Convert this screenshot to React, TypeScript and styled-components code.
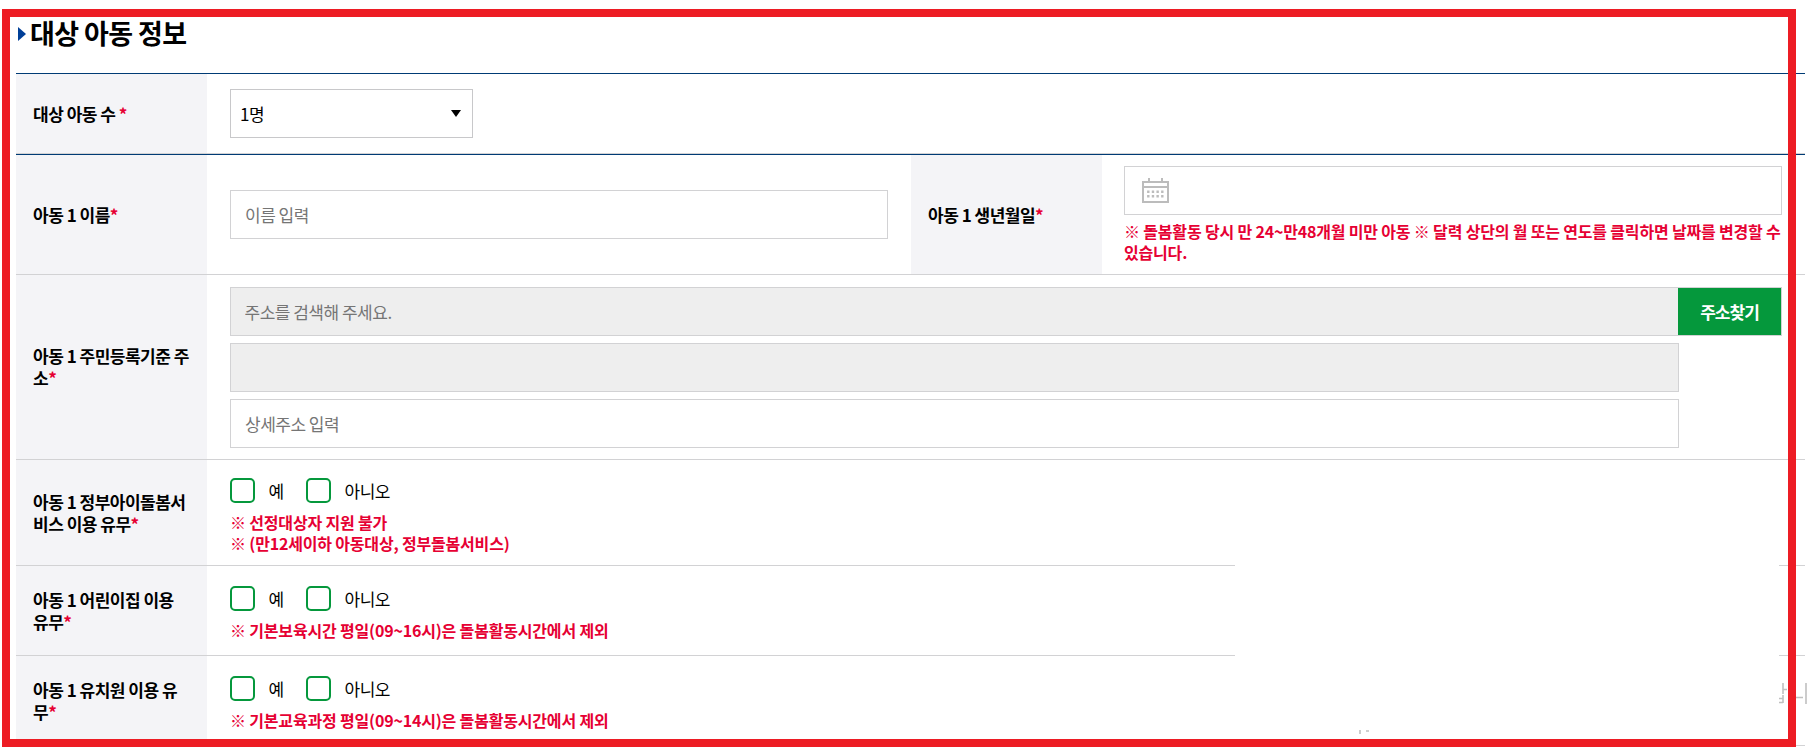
import React from "react";
import styled, { createGlobalStyle } from "styled-components";

const GlobalStyle = createGlobalStyle`
  * {
    box-sizing: border-box;
  }
  body {
    margin: 0;
    background: #fff;
    color: #000;
    font-family: "Noto Sans CJK KR", sans-serif;
    font-size: 17px;
    letter-spacing: -0.5px;
    overflow: hidden;
  }
`;

const Page = styled.main`
  position: relative;
  width: 1808px;
  height: 756px;
  padding: 9px 3px 0 16px;
  overflow: hidden;
`;
/* red highlight drawn over the form */
const Frame = styled.div`
  position: absolute;
  left: 2px;
  top: 9px;
  width: 1794px;
  height: 738px;
  border: 8px solid #ed1c24;
  pointer-events: none;
`;
const Title = styled.h2`
  display: flex;
  align-items: center;
  gap: 4px;
  height: 64px;
  margin: 0;
  padding: 0 0 17px 2px;
  font-size: 27px;
  font-weight: 700;
  line-height: 40px;
  letter-spacing: -0.6px;
`;
const TitleMark = styled.span`
  border-left: 8px solid #003f98;
  border-top: 7.5px solid transparent;
  border-bottom: 7.5px solid transparent;
  margin-top: 3px;
`;
const Table = styled.section`
  border-top: 1px solid #003b75;
`;
const Row = styled.div<{ $height: number }>`
  display: flex;
  height: ${(p) => p.$height}px;
  border-bottom: 1px solid #d2d2d4;
`;
const Label = styled.div`
  display: flex;
  align-items: center;
  width: 191px;
  flex: none;
  padding: 0 17px;
  background: #f4f4f7;
  font-weight: 700;
  line-height: 22px;
  word-break: break-all;
`;
const Star = styled.span`
  color: #e60033;
`;
const Cell = styled.div<{ $gap?: number; $top?: number; $left?: number }>`
  display: flex;
  flex: 1;
  min-width: 0;
  flex-direction: column;
  justify-content: center;
  gap: ${(p) => p.$gap ?? 0}px;
  padding: ${(p) => p.$top ?? 0}px 23px 0 ${(p) => p.$left ?? 23}px;
`;
const Select = styled.button`
  display: flex;
  align-items: center;
  justify-content: space-between;
  width: 243px;
  height: 49px;
  padding: 0 11px 0 9px;
  border: 1px solid #c8c8ca;
  background: #fff;
  color: #000;
  font: inherit;
  letter-spacing: inherit;
`;
const Caret = styled.span`
  border-top: 7px solid #000;
  border-left: 5.5px solid transparent;
  border-right: 5.5px solid transparent;
`;
const Input = styled.input<{ $short?: boolean }>`
  width: ${(p) => (p.$short ? "1449px" : "100%")};
  height: 49px;
  min-width: 0;
  padding: 0 14px;
  border: 1px solid #d2d2d4;
  border-radius: 0;
  background: #fff;
  font: inherit;
  letter-spacing: inherit;
  &:read-only {
    background: #eee;
  }
  &::placeholder {
    color: #757575;
  }
`;
const DateField = styled.div`
  display: flex;
  align-items: center;
  height: 49px;
  padding: 0 17px;
  border: 1px solid #d2d2d4;
`;
const Search = styled.div`
  display: flex;
  height: 49px;
  border: 1px solid #d2d2d4;
  background: #eee;
  input {
    flex: 1;
    height: 47px;
    padding-left: 13.5px;
    border: 0;
  }
`;
const SearchButton = styled.button`
  width: 103px;
  padding: 0;
  border: 0;
  background: #05983c;
  color: #fff;
  font: inherit;
  font-weight: 700;
  letter-spacing: -1px;
`;
const Notice = styled.p`
  margin: 0;
  color: #e60033;
  font-size: 16px;
  font-weight: 700;
  line-height: 20.8px;
  letter-spacing: -0.18px;
  white-space: pre-line;
`;
const Choices = styled.div`
  display: flex;
  height: 25px;
  line-height: 25px;
`;
const Choice = styled.label<{ $width: number }>`
  display: flex;
  align-items: center;
  gap: 13.5px;
  width: ${(p) => p.$width}px;
`;
const Check = styled.input`
  appearance: none;
  width: 25px;
  height: 25px;
  margin: 0;
  border: 2px solid #05983c;
  border-radius: 5px;
  background: #fff;
`;
/* blank patch which hides part of the row lines */
const Cover = styled.div`
  position: absolute;
  left: 1235px;
  top: 480px;
  width: 544px;
  height: 256px;
  background: #fff;
`;
const Remnant = styled.svg`
  position: absolute;
  left: 0;
  top: 0;
`;

const Calendar = () => (
  <svg width="27" height="25" viewBox="0 0 27 25" fill="none" stroke="#bcbcbc">
    <path d="M1 4H26V24H1ZM0 9H27" strokeWidth="2" />
    <path d="M7 0V4M20 0V4" strokeWidth="2" />
    <path d="M5.1 13.7H21.8M5.1 18.3H21.8" strokeWidth="2.4" strokeDasharray="2.4 2.27" />
  </svg>
);

interface QuestionProps {
  label: string;
  notice: string;
  height: number;
}

const Question: React.FC<QuestionProps> = ({ label, notice, height }) => (
  <Row $height={height}>
    <Label>
      <span>
        {label}
        <Star>*</Star>
      </span>
    </Label>
    <Cell $gap={9} $top={6}>
      <Choices>
        <Choice $width={76}>
          <Check type="checkbox" />예
        </Choice>
        <Choice $width={90}>
          <Check type="checkbox" />
          아니오
        </Choice>
      </Choices>
      <Notice>{notice}</Notice>
    </Cell>
  </Row>
);

const App: React.FC = () => {
  return (
    <Page>
      <GlobalStyle />
      <Title>
        <TitleMark />
        대상 아동 정보
      </Title>
      <Table>
        <Row $height={80}>
          <Label>
            <span>
              대상 아동 수 <Star>*</Star>
            </span>
          </Label>
          <Cell>
            <Select>
              1명
              <Caret />
            </Select>
          </Cell>
        </Row>
      </Table>
      <Table>
        <Row $height={120}>
          <Label>
            <span>
              아동 1 이름<Star>*</Star>
            </span>
          </Label>
          <Cell>
            <Input placeholder="이름 입력" />
          </Cell>
          <Label>
            <span>
              아동 1 생년월일<Star>*</Star>
            </span>
          </Label>
          <Cell $gap={6} $left={22}>
            <DateField>
              <Calendar />
            </DateField>
            <Notice>
              ※ 돌봄활동 당시 만 24~만48개월 미만 아동 ※ 달력 상단의 월 또는 연도를 클릭하면 날짜를 변경할 수 있습니다.
            </Notice>
          </Cell>
        </Row>
        <Row $height={185}>
          <Label>
            <span>
              아동 1 주민등록기준 주소<Star>*</Star>
            </span>
          </Label>
          <Cell $gap={7}>
            <Search>
              <Input readOnly placeholder="주소를 검색해 주세요." />
              <SearchButton>주소찾기</SearchButton>
            </Search>
            <Input $short readOnly />
            <Input $short placeholder="상세주소 입력" />
          </Cell>
        </Row>
        <Question
          height={106}
          label="아동 1 정부아이돌봄서비스 이용 유무"
          notice={"※ 선정대상자 지원 불가\n※ (만12세이하 아동대상, 정부돌봄서비스)"}
        />
        <Question
          height={90}
          label="아동 1 어린이집 이용 유무"
          notice="※ 기본보육시간 평일(09~16시)은 돌봄활동시간에서 제외"
        />
        <Question
          height={90}
          label="아동 1 유치원 이용 유무"
          notice="※ 기본교육과정 평일(09~14시)은 돌봄활동시간에서 제외"
        />
      </Table>
      <Cover />
      <Remnant width="1808" height="756" fill="none" stroke="#c0c0c0">
        <path d="M1783 683V694M1783 689.5H1787M1779 698.5H1783M1783 695V703M1779 702.5H1783M1796 697.5H1803M1806 683V704" strokeWidth="1.6" />
        <path d="M1360 730V734M1366 731H1369" strokeWidth="1.6" />
      </Remnant>
      <Frame />
    </Page>
  );
};

export default App;
